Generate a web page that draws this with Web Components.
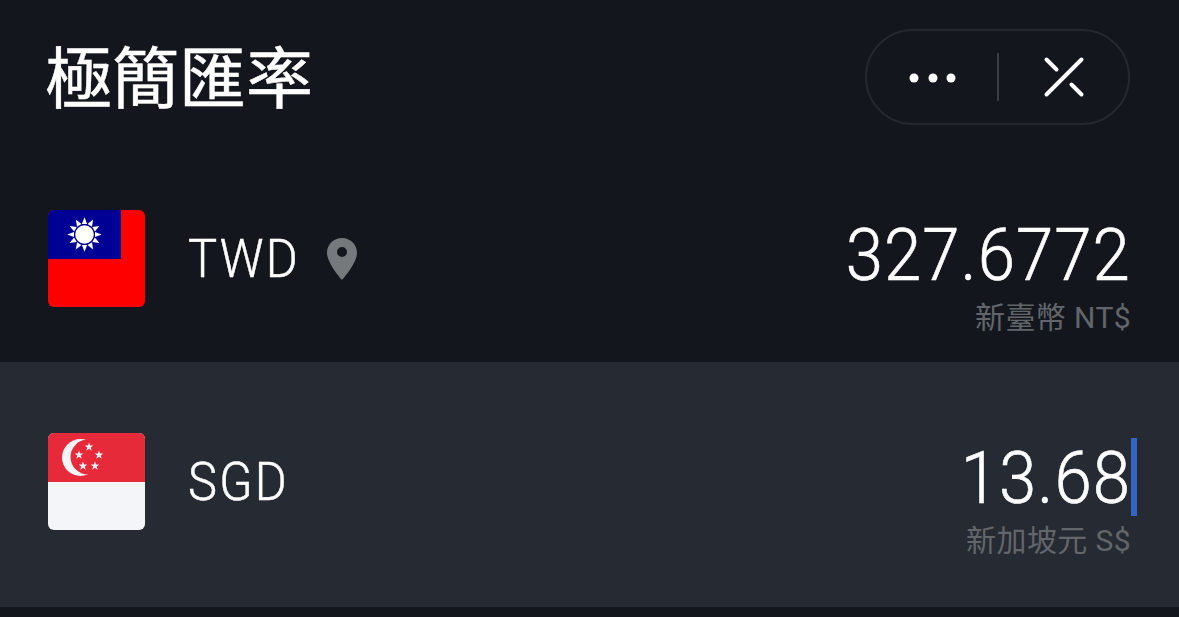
<!DOCTYPE html>
<html lang="zh-Hant">
<head>
<meta charset="utf-8">
<title>極簡匯率</title>
<style>
  html, body { margin: 0; height: 100%; background: #13171d; overflow: hidden; }
  body { font-family: "Roboto", "Noto Sans CJK TC", sans-serif; color: #fff; }
</style>
</head>
<body>
<rate-app>
  <rate-header slot="header" title="極簡匯率"></rate-header>
  <currency-row code="TWD" amount="327.6772" label="新臺幣 NT$" located>
    <flag-tw slot="flag"></flag-tw>
  </currency-row>
  <currency-row code="SGD" amount="13.68" label="新加坡元 S$" active>
    <flag-sg slot="flag"></flag-sg>
  </currency-row>
</rate-app>

<script>
window.customElements.define('rate-app',
  class RateApp extends HTMLElement {
    constructor () {
      super()
      this.attachShadow({mode: 'open'})
      this.shadowRoot.innerHTML = `
        <style>
          :host { display: flex; flex-direction: column; height: 617px; background: #13171d; }
        </style>
        <slot name="header"></slot>
        <slot></slot>`
    }
})

window.customElements.define('capsule-menu',
  class CapsuleMenu extends HTMLElement {
    constructor () {
      super()
      this.attachShadow({mode: 'open'})
      this.shadowRoot.innerHTML = `
        <style>
          :host {
            display: flex;
            align-items: center;
            box-sizing: border-box;
            width: 265px;
            height: 96px;
            border: 2px solid #25292e;
            border-radius: 48px;
          }
          .button { flex: 1; display: flex; align-items: center; justify-content: center; padding-left: 2px; }
          .divider { width: 2px; height: 48px; background: #3a3e43; }
          svg { display: block; }
          .dots { margin-top: 2px; }
        </style>
        <div class="button">
          <svg class="dots" width="48" height="12" viewBox="0 0 48 12" fill="#fff">
            <circle cx="5" cy="6" r="4.5"/><circle cx="24" cy="6" r="4.5"/><circle cx="42" cy="6" r="4.5"/>
          </svg>
        </div>
        <div class="divider"></div>
        <div class="button">
          <svg width="42" height="42" viewBox="0 0 42 42" stroke="#fff" stroke-width="4" stroke-linecap="round" fill="none">
            <path d="M3.500 38.500 38.500 3.500M3.500 3.500 13.500 13.500M28.500 28.500 38.500 38.500"/>
          </svg>
        </div>`
    }
})

window.customElements.define('rate-header',
  class RateHeader extends HTMLElement {
    constructor () {
      super()
      this.attachShadow({mode: 'open'})
      this.shadowRoot.innerHTML = `
        <style>
          :host {
            display: flex;
            align-items: center;
            justify-content: space-between;
            box-sizing: border-box;
            height: 139px;
            padding: 29px 49px 14px 45px;
          }
          h1 {
            margin: 0 0 7px;
            font: 400 67px/87px "Noto Sans CJK TC", sans-serif;
            -webkit-text-stroke: 0.5px #fff;
            color: #fff;
          }
        </style>
        <h1>${this.getAttribute('title')}</h1>
        <capsule-menu></capsule-menu>`
    }
})

window.customElements.define('currency-row',
  class CurrencyRow extends HTMLElement {
    constructor () {
      super()
      this.attachShadow({mode: 'open'})
    }

    connectedCallback () {
      const pin = this.hasAttribute('located') ? `
        <svg class="pin" width="30" height="42" viewBox="0 0 30 42">
          <path fill="#76797c" fill-rule="evenodd" d="M15 0C6.700 0 0 6.600 0 14.800 0 25.500 15 42 15 42S30 25.500 30 14.800C30 6.600 23.300 0 15 0ZM15 9A5 5 0 1 1 15 19 5 5 0 1 1 15 9Z"/>
        </svg>` : ''
      const cursor = this.hasAttribute('active') ? '<span class="cursor"></span>' : ''

      this.shadowRoot.innerHTML = `
        <style>
          :host {
            display: flex;
            align-items: center;
            padding: 71px 49px 55px 48px;
          }
          :host([active]) { background: #262a32; padding-bottom: 77px; }
          .code {
            display: flex;
            align-items: center;
            margin-left: 43px;
            font: 300 53px/1 "Roboto", sans-serif;
            letter-spacing: 2.5px;
            -webkit-text-stroke: 0.5px #fff;
          }
          /* Roboto is wider than the reference's DIN-like face, so narrow the glyphs */
          .code span { display: inline-block; padding-top: 2px; transform: scaleX(0.92); transform-origin: left center; }
          .pin { margin-left: 17.5px; }
          .side { position: relative; align-self: flex-start; height: 97px; margin-left: auto; text-align: right; }
          .amount {
            font: 300 73px/90px "Roboto", sans-serif;
            letter-spacing: 1.1px;
            margin-right: -1px;
            -webkit-text-stroke: 0.6px #fff;
            transform: scaleX(0.92);
            transform-origin: right center;
          }
          .label {
            font: 400 30px/36px "Roboto", "Noto Sans CJK TC", sans-serif;
            letter-spacing: 0.4px;
            margin-right: -1px;
            color: #62666b;
          }
          .cursor {
            position: absolute;
            top: 5px;
            right: -7px;
            width: 6px;
            height: 78px;
            background: #3265c4;
          }
          ::slotted(*) { flex: none; }
        </style>
        <slot name="flag"></slot>
        <div class="code"><span>${this.getAttribute('code')}</span>${pin}</div>
        <div class="side">
          <div class="amount">${this.getAttribute('amount')}</div>
          <div class="label">${this.getAttribute('label')}</div>
          ${cursor}
        </div>`
    }
})

window.customElements.define('flag-tw',
  class FlagTw extends HTMLElement {
    constructor () {
      super()
      this.attachShadow({mode: 'open'})
      // twelve rays around the sun
      var rays = ''
      for (let i = 0; i < 12; i++) {
        rays += `<path d="M36.500 7.300 33.900 14H39.100Z" transform="rotate(${i * 30} 36.500 24.500)"/>`
      }
      this.shadowRoot.innerHTML = `
        <style>
          :host { display: block; width: 97px; height: 97px; border-radius: 6px; overflow: hidden; }
          svg { display: block; }
        </style>
        <svg width="97" height="97" viewBox="0 0 97 97">
          <rect width="97" height="97" fill="#fe0000"/>
          <rect width="73" height="49" fill="#000095"/>
          <g fill="#fff">${rays}</g>
          <circle cx="36.500" cy="24.500" r="9.300" fill="#fff"/>
        </svg>`
    }
})

window.customElements.define('flag-sg',
  class FlagSg extends HTMLElement {
    constructor () {
      super()
      this.attachShadow({mode: 'open'})
      const star = 'M0-4.500 1.100-1.400H4.300L1.700.500 2.700 3.700 0 1.800-2.700 3.700-1.700.500-4.300-1.400H-1.100Z'
      const stars = [[41, 14], [31, 22], [51, 22], [35, 33], [47, 33]]
        .map(([x, y]) => `<path d="${star}" transform="translate(${x} ${y})"/>`).join('')
      this.shadowRoot.innerHTML = `
        <style>
          :host { display: block; width: 97px; height: 97px; border-radius: 6px; overflow: hidden; }
          svg { display: block; }
        </style>
        <svg width="97" height="97" viewBox="0 0 97 97">
          <rect width="97" height="97" fill="#f4f5f8"/>
          <rect width="97" height="49" fill="#e72a3a"/>
          <circle cx="32.500" cy="24.500" r="18.500" fill="#f4f5f8"/>
          <circle cx="40" cy="24" r="17.500" fill="#e72a3a"/>
          <g fill="#f4f5f8">${stars}</g>
        </svg>`
    }
})
</script>
</body>
</html>
